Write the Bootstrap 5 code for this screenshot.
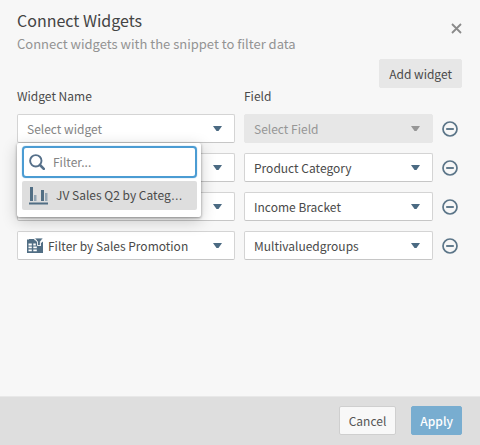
<!DOCTYPE html>
<html lang="en">
<head>
<meta charset="utf-8">
<meta name="viewport" content="width=device-width, initial-scale=1">
<title>Connect Widgets</title>
<link href="https://cdn.jsdelivr.net/npm/bootstrap@5.3.0/dist/css/bootstrap.min.css" rel="stylesheet">
<style>
  body { background: #f7f7f7; color: #4a4a4a; font-family: "Noto Sans CJK SC", "Open Sans", sans-serif; font-size: 12px; font-weight: 400; line-height: 16px; }
  .dialog-main { padding: 8px 18px 24px 17px; }
  .dialog-title { font-size: 16px; line-height: 24px; font-weight: 400; color: #444; }
  .dialog-sub { color: #939393; line-height: 24px; font-size: 13px; }
  .close-btn { width: 11px; height: 11px; line-height: 0; margin-top: 15px; color: #8a8a8a; }
  .add-row { padding-top: 3px; }
  .ui-btn { --bs-btn-padding-x: 9px; --bs-btn-padding-y: 4px; --bs-btn-font-size: 12px; --bs-btn-line-height: 19px; --bs-btn-border-radius: 2px; height: 29px; }
  .add-btn { --bs-btn-bg: #e7e7e7; --bs-btn-color: #4a4a4a; --bs-btn-border-color: #e7e7e7; }
  .cancel-btn { --bs-btn-bg: #f8f8f8; --bs-btn-color: #555; --bs-btn-border-color: #cfcfcf; }
  .apply-btn { --bs-btn-bg: #78add0; --bs-btn-color: #fff; --bs-btn-border-color: #78add0; --bs-btn-font-weight: 500; --bs-btn-padding-x: 8px; }
  .pairs { display: grid; grid-template-columns: minmax(0, 218fr) minmax(0, 189fr) 20px; gap: 10px 9px; align-items: center; }
  .ui-select { height: 29px; padding: 3px 24px 3px 9px; font-size: 12px; line-height: 20px; color: #4a4a4a; background-color: #fff; border: 1px solid #d4d4d4; border-bottom-color: #c6c6c6; border-radius: 2px; background-position: right 12px center; background-size: 9px 5px;
    background-image: url("data:image/svg+xml,%3Csvg xmlns='http://www.w3.org/2000/svg' viewBox='0 0 9 5'%3E%3Cpath fill='%234b6a82' d='M0 0h9L5.5 5h-2z'/%3E%3C/svg%3E"); }
  .ui-select.unset { color: #848484; }
  .ui-select:disabled { background-color: #e7e7e7; border-color: #e7e7e7; color: #969696; opacity: 1;
    background-image: url("data:image/svg+xml,%3Csvg xmlns='http://www.w3.org/2000/svg' viewBox='0 0 9 5'%3E%3Cpath fill='%23969696' d='M0 0h9L5.5 5h-2z'/%3E%3C/svg%3E"); }
  .ui-select.with-icon { padding-left: 30px; }
  .select-icon { left: 10px; top: 7px; pointer-events: none; }
  .remove-btn { line-height: 0; color: #5b7588; justify-self: start; }
  .picker { top: 100%; left: 0; width: 184px; padding: 3px 4px 7px 5px; background: #fff; border-radius: 2px; box-shadow: 0 1px 3px rgba(0,0,0,.4), 0 4px 16px rgba(0,0,0,.2); z-index: 5; }
  .picker-search { height: 32px; padding: 0 7px 0 5px; border: 2px solid #4b9cd3; border-radius: 4px; box-shadow: 0 0 1px 0 #4b9cd3; color: #56708a; }
  .picker-search input { line-height: 20px; outline: 0; color: #4a4a4a; }
  .picker-search input::placeholder { color: #848484; opacity: 1; }
  .picker-item { height: 29px; margin-top: 3px; padding: 0 8px 0 7px; background: #dedede; color: #4a4a4a; border-radius: 2px; line-height: 20px; }
  .ellipsis { font-family: "Liberation Sans", Arial, sans-serif; }
  .dialog-footer { background: #dedede; border-top: 1px solid #e8e8e8; padding: 9px 18px 10px; gap: 15px; }
</style>
</head>
<body>
<form class="d-flex flex-column min-vh-100">
  <main class="dialog-main flex-grow-1">
    <header class="d-flex justify-content-between">
      <div>
        <h1 class="dialog-title mb-0">Connect Widgets</h1>
        <p class="dialog-sub mb-0">Connect widgets with the snippet to filter data</p>
      </div>
      <button type="button" class="close-btn border-0 bg-transparent p-0" aria-label="Close">
        <svg width="11" height="11" viewBox="0 0 11 11" fill="none" stroke="currentColor" stroke-width="1.8"><path d="M1 1l9 9M10 1l-9 9"/></svg>
      </button>
    </header>
    <div class="add-row d-flex justify-content-end">
      <button type="button" class="btn ui-btn add-btn">Add widget</button>
    </div>
    <div class="pairs">
      <div>Widget Name</div><div>Field</div><div></div>

      <div class="position-relative">
        <select class="form-select ui-select unset" aria-label="Widget 1"><option>Select widget</option></select>
        <div class="picker position-absolute">
          <label class="picker-search d-flex align-items-center gap-2">
            <svg class="flex-shrink-0" width="16" height="16" viewBox="0 0 16 16" fill="none" stroke="currentColor"><circle cx="6.8" cy="6.8" r="5.7" stroke-width="1.9"/><path d="M11 11l3.800 3.800" stroke-width="2.600" stroke-linecap="round"/></svg>
            <input type="text" class="border-0 p-0 w-100 bg-transparent" placeholder="Filter..." aria-label="Filter widgets">
          </label>
          <button type="button" class="picker-item d-flex align-items-center gap-2 border-0 w-100 text-start">
            <svg class="flex-shrink-0" width="19" height="18" viewBox="0 0 19 18"><path fill="#516e84" d="M1 0h3v14H1zM12 3h3v11h-3zM0 15.500h19V17.500H0z"/><path fill="#93a5b3" d="M5 8h2.500v6H5zM16 6h2.500v8H16z"/></svg>
            <span class="text-nowrap">JV Sales Q2 by Categ<span class="ellipsis">…</span></span>
          </button>
        </div>
      </div>
      <select class="form-select ui-select" aria-label="Field 1" disabled><option>Select Field</option></select>
      <button type="button" class="remove-btn border-0 bg-transparent p-0" aria-label="Remove row 1"><svg width="16" height="16" viewBox="0 0 16 16" fill="none" stroke="currentColor" stroke-width="1.7"><circle cx="8" cy="8" r="7"/><path d="M4.200 8h7.600" stroke-width="1.900"/></svg></button>

      <select class="form-select ui-select" aria-label="Widget 2"><option></option></select>
      <select class="form-select ui-select" aria-label="Field 2"><option>Product Category</option></select>
      <button type="button" class="remove-btn border-0 bg-transparent p-0" aria-label="Remove row 2"><svg width="16" height="16" viewBox="0 0 16 16" fill="none" stroke="currentColor" stroke-width="1.7"><circle cx="8" cy="8" r="7"/><path d="M4.200 8h7.600" stroke-width="1.900"/></svg></button>

      <select class="form-select ui-select" aria-label="Widget 3"><option></option></select>
      <select class="form-select ui-select" aria-label="Field 3"><option>Income Bracket</option></select>
      <button type="button" class="remove-btn border-0 bg-transparent p-0" aria-label="Remove row 3"><svg width="16" height="16" viewBox="0 0 16 16" fill="none" stroke="currentColor" stroke-width="1.7"><circle cx="8" cy="8" r="7"/><path d="M4.200 8h7.600" stroke-width="1.900"/></svg></button>

      <div class="position-relative">
        <select class="form-select ui-select with-icon" aria-label="Widget 4"><option>Filter by Sales Promotion</option></select>
        <svg class="select-icon position-absolute" width="16" height="15" viewBox="0 0 16 15"><path fill="#516e84" d="M0 1.500h2V1h5l1 1.500h1L10.500 5v3H14V5l2-1.500V15H0z"/><path fill="#fff" d="M1.500 5.500h3.300v2H1.500zM1.500 8.500h3.300v1.800H1.500zM1.500 11.500h3.300v1.800H1.500zM6.300 5.500h2.500v2H6.300zM6.300 8.500h3.500v1.800H6.300zM6.300 11.500h3.500v1.800H6.300z"/><path fill="#516e84" stroke="#fff" stroke-width=".8" d="M7.500 0H16.300l-3 3.700v3.800h-2.800V3.700z"/></svg>
      </div>
      <select class="form-select ui-select" aria-label="Field 4"><option>Multivaluedgroups</option></select>
      <button type="button" class="remove-btn border-0 bg-transparent p-0" aria-label="Remove row 4"><svg width="16" height="16" viewBox="0 0 16 16" fill="none" stroke="currentColor" stroke-width="1.7"><circle cx="8" cy="8" r="7"/><path d="M4.200 8h7.600" stroke-width="1.900"/></svg></button>
    </div>
  </main>
  <footer class="dialog-footer d-flex justify-content-end">
    <button type="button" class="btn ui-btn cancel-btn">Cancel</button>
    <button type="submit" class="btn ui-btn apply-btn">Apply</button>
  </footer>
</form>
<script src="https://cdn.jsdelivr.net/npm/bootstrap@5.3.0/dist/js/bootstrap.bundle.min.js"></script>
</body>
</html>
